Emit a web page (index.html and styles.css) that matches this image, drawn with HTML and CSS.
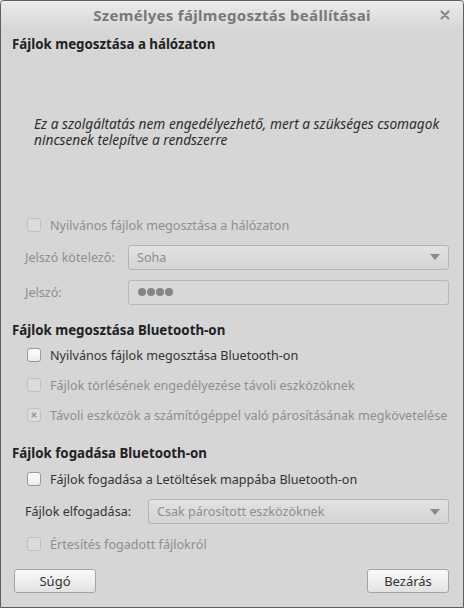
FILE: index.html
```html
<!DOCTYPE html>
<html lang="hu">
<head>
<meta charset="utf-8">
<link rel="stylesheet" href="styles.css">
</head>
<body>
<div class="window">
  <div class="titlebar">
    <span class="title">Személyes fájlmegosztás beállításai</span>
    <span class="close">
      <svg width="10" height="10" viewBox="0 0 10 10"><path d="M1.5 1.5 L8.5 8.5 M8.5 1.5 L1.5 8.5" stroke="#8a8a8a" stroke-width="2.2" stroke-linecap="round"/></svg>
    </span>
  </div>
  <div class="content">
    <section class="sec1">
      <h2 class="heading">Fájlok megosztása a hálózaton</h2>
      <p class="notice">Ez a szolgáltatás nem engedélyezhető, mert a szükséges csomagok nincsenek telepítve a rendszerre</p>
      <label class="check disabled first"><span class="box"></span>Nyilvános fájlok megosztása a hálózaton</label>
      <div class="field disabled f1">
        <span class="flabel">Jelszó kötelező:</span>
        <div class="combo"><span>Soha</span><span class="arrow"></span></div>
      </div>
      <div class="field disabled f2">
        <span class="flabel">Jelszó:</span>
        <div class="entry"><span class="dot"></span><span class="dot"></span><span class="dot"></span><span class="dot"></span></div>
      </div>
    </section>
    <section class="sec2">
      <h2 class="heading">Fájlok megosztása Bluetooth-on</h2>
      <label class="check"><span class="box"></span>Nyilvános fájlok megosztása Bluetooth-on</label>
      <label class="check disabled"><span class="box"></span>Fájlok törlésének engedélyezése távoli eszközöknek</label>
      <label class="check disabled"><span class="box checked"><svg width="6" height="6" viewBox="0 0 6 6"><path d="M0.8 0.8 L5.2 5.2 M5.2 0.8 L0.8 5.2" stroke="#9a9a9a" stroke-width="1.6"/></svg></span>Távoli eszközök a számítógéppel való párosításának megkövetelése</label>
    </section>
    <section class="sec3">
      <h2 class="heading">Fájlok fogadása Bluetooth-on</h2>
      <label class="check"><span class="box"></span>Fájlok fogadása a Letöltések mappába Bluetooth-on</label>
      <div class="field field2">
        <span class="flabel">Fájlok elfogadása:</span>
        <div class="combo disabled"><span>Csak párosított eszközöknek</span><span class="arrow"></span></div>
      </div>
      <label class="check disabled"><span class="box"></span>Értesítés fogadott fájlokról</label>
    </section>
    <div class="buttons">
      <button class="btn">Súgó</button>
      <button class="btn">Bezárás</button>
    </div>
  </div>
</div>
</body>
</html>
```

FILE: styles.css
```css
* { box-sizing: border-box; }
html, body { margin: 0; padding: 0; }
body {
  width: 464px;
  height: 608px;
  font-family: "Noto Sans", "DejaVu Sans", sans-serif;
  font-size: 12.6px;
  color: #3a3a3a;
  background: #d6d6d6;
}
.window {
  width: 464px;
  height: 608px;
  border: 1px solid #5e5e5e;
  border-radius: 4px 4px 0 0;
  background: #d6d6d6;
  display: flex;
  flex-direction: column;
  overflow: hidden;
}
.titlebar {
  height: 27px;
  flex: none;
  position: relative;
  display: flex;
  align-items: center;
  justify-content: center;
  background: linear-gradient(#ebebeb, #d8d8d8);
}
.title {
  font-weight: bold;
  font-size: 15px;
  letter-spacing: 0.3px;
  color: #787878;
}
.close {
  position: absolute;
  right: 13px;
  top: 9px;
  line-height: 0;
}
.content {
  flex: 1;
  display: flex;
  flex-direction: column;
  padding: 0 14px 0 11px;
}
.heading {
  margin: 0;
  font-size: 13.3px;
  font-weight: bold;
  color: #222;
  line-height: 18px;
  white-space: nowrap;
}
.sec1 .heading { margin-top: 7px; }
.notice {
  margin: 63px 0 0 22px;
  font-style: italic;
  font-size: 13.7px;
  color: #2e2e2e;
  line-height: 16px;
}
.check {
  display: flex;
  align-items: center;
  height: 30px;
  margin-left: 15px;
  color: #333;
  white-space: nowrap;
}
.check.disabled { color: #8e8e8e; }
.check.first { margin-top: 62px; }
.box {
  width: 14px;
  height: 14px;
  border: 1px solid #9a9a9a;
  border-radius: 3px;
  background: linear-gradient(#ffffff, #ececec);
  margin-right: 9px;
  display: flex;
  align-items: center;
  justify-content: center;
  flex: none;
}
.check.disabled .box {
  border-color: #c0c0c0;
  background: #dcdcdc;
}
.field {
  display: flex;
  align-items: center;
  height: 34px;
  margin-left: 13px;
  white-space: nowrap;
}
.field.f2 { height: 36px; }
.field.disabled .flabel { color: #8e8e8e; }
.flabel { width: 103px; flex: none; }
.field2 .flabel { width: 123px; color: #333; }
.combo {
  flex: 1;
  height: 25px;
  border: 1px solid #b4b4b4;
  border-radius: 3px;
  background: linear-gradient(#e2e2e2, #d4d4d4);
  display: flex;
  align-items: center;
  justify-content: space-between;
  padding: 0 8px 0 8px;
  color: #8e8e8e;
}
.arrow {
  width: 0;
  height: 0;
  border-left: 5px solid transparent;
  border-right: 5px solid transparent;
  border-top: 6px solid #8a8a8a;
}
.entry {
  flex: 1;
  height: 25px;
  border: 1px solid #b8b8b8;
  border-radius: 3px;
  background: #d8d8d8;
  display: flex;
  align-items: center;
  padding-left: 9px;
  gap: 1px;
}
.dot {
  width: 8px;
  height: 8px;
  border-radius: 50%;
  background: #858585;
}
.sec2 { margin-top: 11px; }
.sec2 .heading { margin-bottom: 1px; }
.sec3 { margin-top: 14px; }
.sec3 .heading { margin-bottom: 2px; }
.field2 { height: 35px; }
.buttons {
  margin-top: auto;
  margin-bottom: 14px;
  margin-left: 2px;
  display: flex;
  justify-content: space-between;
}
.btn {
  width: 82px;
  height: 24px;
  font-family: inherit;
  font-size: 13px;
  color: #333;
  border: 1px solid #a4a4a4;
  border-radius: 3px;
  background: linear-gradient(#fafafa, #e2e2e2);
  padding: 0;
}
```
